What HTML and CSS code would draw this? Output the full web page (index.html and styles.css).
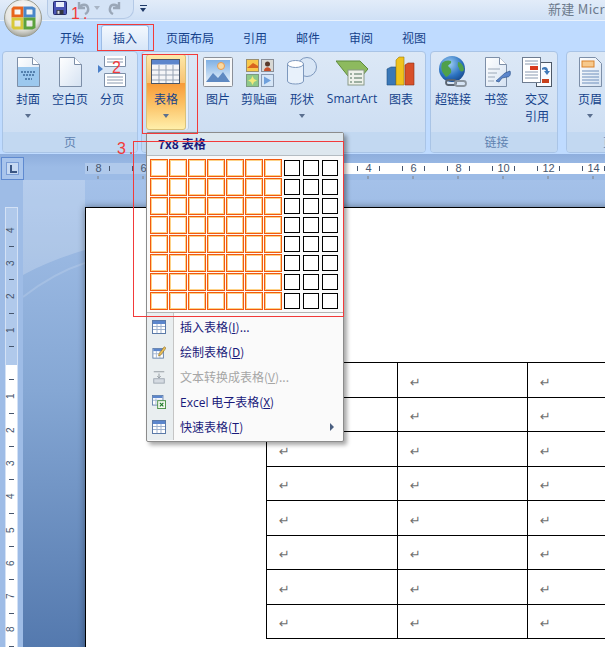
FILE: index.html
```html
<!DOCTYPE html>
<html lang="zh-CN">
<head>
    <meta charset="UTF-8">
    <meta name="viewport" content="width=device-width, initial-scale=1.0">
    <title>新建 Microsoft Word</title>
    <link rel="stylesheet" href="styles.css">
</head>
<body>
    <svg class="defs" width="0" height="0">
        <defs>
            <linearGradient id="page-fill" x1="0" y1="0" x2="1" y2="1">
                <stop offset="0" stop-color="#ffffff"/>
                <stop offset="1" stop-color="#d5e2f2"/>
            </linearGradient>
            <radialGradient id="orb-fill" cx="0.5" cy="0.35" r="0.7">
                <stop offset="0" stop-color="#ffffff"/>
                <stop offset="0.65" stop-color="#e6e6e2"/>
                <stop offset="1" stop-color="#8f9186"/>
            </radialGradient>
            <radialGradient id="globe-fill" cx="0.4" cy="0.3" r="0.8">
                <stop offset="0" stop-color="#9fd0f5"/>
                <stop offset="0.6" stop-color="#2c72c0"/>
                <stop offset="1" stop-color="#123f7f"/>
            </radialGradient>
            <linearGradient id="sky-fill" x1="0" y1="0" x2="0" y2="1">
                <stop offset="0" stop-color="#7fb0e4"/>
                <stop offset="1" stop-color="#e3effa"/>
            </linearGradient>
            <symbol id="table-small" viewBox="0 0 14 14">
                <rect x="0.5" y="0.5" width="13" height="13" fill="#fff" stroke="#5b7aa8"/>
                <rect x="1" y="1" width="12" height="3" fill="#5b86cc"/>
                <path d="M1 6.5h12M1 9.5h12M5 4v9M9 4v9" stroke="#9fb3cf" fill="none"/>
            </symbol>
        </defs>
    </svg>

    <div class="app">
        <header class="titlebar">
            <div class="qat">
                <svg class="qat-icon" viewBox="0 0 14 14">
                    <rect x="0.5" y="0.5" width="13" height="13" rx="1" fill="#4a55b5" stroke="#23296f"/>
                    <rect x="3" y="1" width="8" height="5" fill="#e8eefa"/>
                    <rect x="3.5" y="9" width="7" height="4.5" fill="#33363f"/>
                    <rect x="4.5" y="9.8" width="2" height="3" fill="#d8dbe6"/>
                </svg>
                <svg class="qat-icon undo" viewBox="0 0 14 14">
                    <path d="M3 1v6h6M3.500 7C5 3 11 2.500 12 7c.6 2.600-1 5-3 6" fill="none" stroke="#9aa7b8" stroke-width="2.400"/>
                </svg>
                <span class="qat-drop"></span>
                <svg class="qat-icon redo" viewBox="0 0 14 14">
                    <path d="M11 1v6H5M10.500 7C9 3 3 2.500 2 7c-.6 2.600 1 5 3 6" fill="none" stroke="#9aa7b8" stroke-width="2.400"/>
                </svg>
            </div>
            <div class="qat-more"></div>
            <div class="doc-title">新建 Microsoft Word</div>
        </header>

        <nav class="tabs">
            <a class="tab">开始</a>
            <a class="tab active">插入</a>
            <a class="tab">页面布局</a>
            <a class="tab">引用</a>
            <a class="tab">邮件</a>
            <a class="tab">审阅</a>
            <a class="tab">视图</a>
        </nav>

        <section class="ribbon">
            <div class="group group-pages">
                <div class="group-body">
                    <div class="tool w42">
                        <svg class="tool-icon" viewBox="0 0 32 32">
                            <path d="M5.5 1.5h15l7 7v22h-22z" fill="url(#page-fill)" stroke="#7d8fa8"/>
                            <path d="M20.5 1.5v7h7" fill="#fff" stroke="#7d8fa8"/>
                            <rect x="6" y="11" width="21" height="19" fill="#9cc8ee"/>
                            <path d="M9 16h15M11 19h11M13 23h7" stroke="#3e6a99" stroke-width="1.4" stroke-dasharray="2 1"/>
                        </svg>
                        <span class="tool-label">封面</span>
                        <span class="drop"></span>
                    </div>
                    <div class="tool w42">
                        <svg class="tool-icon" viewBox="0 0 32 32">
                            <path d="M5.5 1.5h15l7 7v22h-22z" fill="url(#page-fill)" stroke="#7d8fa8"/>
                            <path d="M20.5 1.5v7h7" fill="#fff" stroke="#7d8fa8"/>
                        </svg>
                        <span class="tool-label">空白页</span>
                    </div>
                    <div class="tool w42">
                        <svg class="tool-icon" viewBox="0 0 32 32">
                            <path d="M8.5 0v10.500h21V0" fill="#fff" stroke="#7d8fa8"/>
                            <path d="M8.500 17.500h21v13h-21z" fill="#fff" stroke="#7d8fa8"/>
                            <path d="M11 3h16M11 6h16M11 21h16M11 24h16M11 27h16" stroke="#8a9ab0"/>
                            <path d="M2 9l5 4-5 4z" fill="#4a7fc8"/>
                        </svg>
                        <span class="tool-label">分页</span>
                    </div>
                </div>
                <div class="group-name">页</div>
            </div>

            <div class="group group-tables">
                <div class="group-body">
                    <div class="tool tool-on">
                        <svg class="tool-icon" viewBox="0 0 32 32">
                            <rect x="1.500" y="3.500" width="28" height="24" fill="#f4f5f7" stroke="#4a5668"/>
                            <rect x="2" y="4" width="27" height="4.500" fill="#5c86cc"/>
                            <path d="M2 14h27M2 19h27M2 24h27M9 9v18M16 9v18M23 9v18" stroke="#97a3b3" fill="none"/>
                        </svg>
                        <span class="tool-label">表格</span>
                        <span class="drop"></span>
                    </div>
                    <div class="tool w42 after-sep">
                        <svg class="tool-icon" viewBox="0 0 32 32">
                            <rect x="1.500" y="1.500" width="29" height="29" rx="1" fill="#f6f7f8" stroke="#8a8f98"/>
                            <rect x="4" y="4" width="24" height="22" fill="url(#sky-fill)"/>
                            <circle cx="19" cy="10" r="3.500" fill="#f9d9a0" stroke="#e89b4f"/>
                            <path d="M4 26l7-9 5 5 5-6 7 10z" fill="#5e89c2"/>
                        </svg>
                        <span class="tool-label">图片</span>
                    </div>
                    <div class="tool w40">
                        <svg class="tool-icon" viewBox="0 0 32 32">
                            <rect x="3.500" y="3.500" width="12" height="12" fill="#f8c84a" stroke="#9a8f70"/>
                            <path d="M4 12l6-5 5 3v2z" fill="#d9661f"/>
                            <rect x="18.500" y="3.500" width="12" height="12" fill="#d8d8d4" stroke="#8a8f98"/>
                            <circle cx="24.500" cy="8" r="2.500" fill="#5a3a2a"/>
                            <path d="M21 15c0-5 7-5 7 0z" fill="#c8502a"/>
                            <rect x="3.500" y="18.500" width="12" height="12" fill="#8fc98a" stroke="#7d9a80"/>
                            <path d="M9.500 20l1.500 3 3 1.500-3 1.500-1.500 3-1.500-3-3-1.500 3-1.500z" fill="#f2e97a"/>
                            <rect x="18.500" y="18.500" width="12" height="12" fill="#d6e6f7" stroke="#8a9ab0"/>
                            <path d="M21 20.500l7 4-7 4z" fill="#6fa0dc"/>
                        </svg>
                        <span class="tool-label">剪贴画</span>
                    </div>
                    <div class="tool w46">
                        <svg class="tool-icon" viewBox="0 0 32 32">
                            <circle cx="21" cy="11" r="9.500" fill="#d8e6f6" stroke="#7d98bd"/>
                            <path d="M1.500 8v17c0 4 16 4 16 0V8z" fill="#e8f1fb" stroke="#7d98bd"/>
                            <ellipse cx="9.500" cy="8" rx="8" ry="3.500" fill="#fff" stroke="#7d98bd"/>
                        </svg>
                        <span class="tool-label">形状</span>
                        <span class="drop"></span>
                    </div>
                    <div class="tool w54">
                        <svg class="tool-icon" viewBox="0 0 32 32">
                            <path d="M0 5h24l8 8-6 7H12z" fill="#8dba5e" stroke="#5e8a3c"/>
                            <rect x="12" y="14" width="16" height="15" fill="#eef1ea" stroke="#8a9a88"/>
                            <path d="M14 18h2M18 18h8M14 22h2M18 22h8M14 26h2M18 26h8" stroke="#4c6e58"/>
                        </svg>
                        <span class="tool-label latin">SmartArt</span>
                    </div>
                    <div class="tool w44">
                        <svg class="tool-icon" viewBox="0 0 32 32">
                            <path d="M2 13l4-2h5v18H2z" fill="#3a78b8" stroke="#1f4e80" stroke-width=".6"/>
                            <path d="M11 4l3-3h5v28h-8z" fill="#f0c21c" stroke="#9a7a0c" stroke-width=".6"/>
                            <path d="M20 9l3-2h6v22h-9z" fill="#d8502a" stroke="#8a2f14" stroke-width=".6"/>
                        </svg>
                        <span class="tool-label">图表</span>
                    </div>
                </div>
                <div class="group-name"></div>
            </div>

            <div class="group group-links">
                <div class="group-body">
                    <div class="tool w44">
                        <svg class="tool-icon" viewBox="0 0 32 32">
                            <circle cx="15" cy="13" r="13" fill="url(#globe-fill)"/>
                            <path d="M5 7c3-3 7-3 9-2 1 3-2 3-3 5 2 2 4 3 3 7-2 1-3 4-5 4C6 17 3 14 5 7zM21 6c3 0 6 4 6 8-2 3-5 1-5-2-2-2-1-4-1-6z" fill="#4fa04a"/>
                            <rect x="9" y="24" width="10" height="5" rx="2.500" fill="none" stroke="#5a6470" stroke-width="1.800"/>
                            <rect x="18" y="25" width="11" height="5" rx="2.500" fill="none" stroke="#8a949e" stroke-width="1.800"/>
                        </svg>
                        <span class="tool-label">超链接</span>
                    </div>
                    <div class="tool w42">
                        <svg class="tool-icon" viewBox="0 0 32 32">
                            <path d="M5.500 1.500h14l7 7v22h-21z" fill="url(#page-fill)" stroke="#7d8fa8"/>
                            <path d="M19.500 1.500v7h7" fill="#fff" stroke="#7d8fa8"/>
                            <path d="M8 13h12M8 17h9M8 21h7M8 25h6" stroke="#9aa8b8"/>
                            <path d="M16 25l9-8 5-2c1 3 0 6-3 6l-5 1-3 4z" fill="#5c86cc" stroke="#2f568f" stroke-width=".7"/>
                        </svg>
                        <span class="tool-label">书签</span>
                    </div>
                    <div class="tool w40">
                        <svg class="tool-icon" viewBox="0 0 32 32">
                            <rect x="15.500" y="6.500" width="15" height="24" fill="#f8fbff" stroke="#4d5866"/>
                            <rect x="1.500" y="1.500" width="18" height="25" fill="#fff" stroke="#6e7c90"/>
                            <path d="M4 5h13M4 8h13M4 16h13M4 19h13M4 22h13" stroke="#8a9ab0"/>
                            <rect x="9" y="10" width="8" height="4" fill="#d83a1c"/>
                            <rect x="21" y="23" width="7" height="4" fill="#c8401c"/>
                            <path d="M21 12c3-2 6-1 6 3h2l-3 4-3-4h2c0-1-2-2-4-1z" fill="#3f78b8"/>
                        </svg>
                        <span class="tool-label">交叉<br>引用</span>
                    </div>
                </div>
                <div class="group-name">链接</div>
            </div>

            <div class="group group-header">
                <div class="group-body">
                    <div class="tool w46">
                        <svg class="tool-icon" viewBox="0 0 32 32">
                            <path d="M5.500 1.500h16l6 6v23h-22z" fill="url(#page-fill)" stroke="#7d8fa8"/>
                            <rect x="8" y="5" width="12" height="6" fill="#f7c98c" stroke="#d9812a"/>
                            <path d="M8 15h17M8 18h17M8 21h17M8 24h17M8 27h17" stroke="#6f8fbc"/>
                        </svg>
                        <span class="tool-label">页眉</span>
                        <span class="drop"></span>
                    </div>
                </div>
                <div class="group-name">页眉和页脚</div>
            </div>
        </section>

        <div class="ruler-row">
            <div class="tab-stop"><span class="tab-stop-l"></span></div>
            <div class="hruler-wrap">
                <div class="hruler">
                    <div class="hcell"><i></i><span>8</span><i></i></div>
                    <div class="hcell"><i></i><span>6</span><i></i></div>
                    <div class="hcell"><i></i><span>4</span><i></i></div>
                    <div class="hcell"><i></i><span>2</span><i></i></div>
                    <div class="hcell"><i></i><span></span><i></i></div>
                    <div class="hcell"><i></i><span>2</span><i></i></div>
                    <div class="hcell"><i></i><span>4</span><i></i></div>
                    <div class="hcell"><i></i><span>6</span><i></i></div>
                    <div class="hcell"><i></i><span>8</span><i></i></div>
                    <div class="hcell"><i></i><span>10</span><i></i></div>
                    <div class="hcell"><i></i><span>12</span><i></i></div>
                    <div class="hcell"><i></i><span>14</span><i></i></div>
                </div>
                <div class="hmarks"></div>
            </div>
        </div>

        <main class="workspace">
            <aside class="side">
                <div class="vruler">
                    <span>4</span><i></i><span>3</span><i></i><span>2</span><i></i><span>1</span><i></i>
                    <span></span><i></i>
                    <span>1</span><i></i><span>2</span><i></i><span>3</span><i></i><span>4</span><i></i>
                    <span>5</span><i></i><span>6</span><i></i><span>7</span><i></i><span>8</span><i></i>
                </div>
            </aside>
            <div class="canvas">
                <svg class="swoosh" viewBox="0 0 62 140" width="62" height="140">
                    <path d="M0 95C20 84 42 76 62 70V0H0z" fill="#fff" fill-opacity=".2"/>
                    <path d="M0 117C18 103 40 90 62 83" fill="none" stroke="#fff" stroke-opacity=".15" stroke-width="2"/>
                </svg>
                <div class="page">
                    <table class="doc-table">
                        <tr><td>↵</td><td>↵</td><td>↵</td></tr>
                        <tr><td>↵</td><td>↵</td><td>↵</td></tr>
                        <tr><td>↵</td><td>↵</td><td>↵</td></tr>
                        <tr><td>↵</td><td>↵</td><td>↵</td></tr>
                        <tr><td>↵</td><td>↵</td><td>↵</td></tr>
                        <tr><td>↵</td><td>↵</td><td>↵</td></tr>
                        <tr><td>↵</td><td>↵</td><td>↵</td></tr>
                        <tr><td>↵</td><td>↵</td><td>↵</td></tr>
                    </table>
                </div>
            </div>
        </main>

        <!-- office orb hangs over the title bar and tabs -->
        <div class="orb">
            <svg viewBox="0 0 38 38" width="38" height="38">
                <circle cx="19" cy="19" r="18.500" fill="url(#orb-fill)" stroke="#9a9c90"/>
                <path d="M10 9h8v8h-9v-7z" fill="none" stroke="#e8641c" stroke-width="3"/>
                <path d="M21 9h7l2 1v7h-9z" fill="none" stroke="#4a86c8" stroke-width="3"/>
                <path d="M9 20h9v9h-8l-1-1z" fill="none" stroke="#d8c83a" stroke-width="3"/>
                <path d="M21 20h9v8l-2 1h-7z" fill="none" stroke="#5ca23c" stroke-width="3"/>
            </svg>
        </div>

        <!-- table dropdown -->
        <div class="menu">
            <div class="menu-head">7x8 表格</div>
            <div class="picker">
                <div class="cell on"></div><div class="cell on"></div><div class="cell on"></div><div class="cell on"></div><div class="cell on"></div><div class="cell on"></div><div class="cell on"></div><div class="cell"></div><div class="cell"></div><div class="cell"></div>
                <div class="cell on"></div><div class="cell on"></div><div class="cell on"></div><div class="cell on"></div><div class="cell on"></div><div class="cell on"></div><div class="cell on"></div><div class="cell"></div><div class="cell"></div><div class="cell"></div>
                <div class="cell on"></div><div class="cell on"></div><div class="cell on"></div><div class="cell on"></div><div class="cell on"></div><div class="cell on"></div><div class="cell on"></div><div class="cell"></div><div class="cell"></div><div class="cell"></div>
                <div class="cell on"></div><div class="cell on"></div><div class="cell on"></div><div class="cell on"></div><div class="cell on"></div><div class="cell on"></div><div class="cell on"></div><div class="cell"></div><div class="cell"></div><div class="cell"></div>
                <div class="cell on"></div><div class="cell on"></div><div class="cell on"></div><div class="cell on"></div><div class="cell on"></div><div class="cell on"></div><div class="cell on"></div><div class="cell"></div><div class="cell"></div><div class="cell"></div>
                <div class="cell on"></div><div class="cell on"></div><div class="cell on"></div><div class="cell on"></div><div class="cell on"></div><div class="cell on"></div><div class="cell on"></div><div class="cell"></div><div class="cell"></div><div class="cell"></div>
                <div class="cell on"></div><div class="cell on"></div><div class="cell on"></div><div class="cell on"></div><div class="cell on"></div><div class="cell on"></div><div class="cell on"></div><div class="cell"></div><div class="cell"></div><div class="cell"></div>
                <div class="cell on"></div><div class="cell on"></div><div class="cell on"></div><div class="cell on"></div><div class="cell on"></div><div class="cell on"></div><div class="cell on"></div><div class="cell"></div><div class="cell"></div><div class="cell"></div>
            </div>
            <ul class="menu-list">
                <li class="menu-item">
                    <svg class="menu-icon"><use href="#table-small"/></svg>
                    <span>插入表格(<u>I</u>)...</span>
                </li>
                <li class="menu-item">
                    <svg class="menu-icon" viewBox="0 0 16 16">
                        <rect x="1" y="4" width="12" height="11" fill="#fff" stroke="#5b7aa8"/>
                        <rect x="1.500" y="4.500" width="11" height="2.500" fill="#5b86cc"/>
                        <path d="M1 10h12M5 7v8M9 7v8" stroke="#9fb3cf"/>
                        <path d="M8 10l6-8 2 1.500-6 8-2.500 1z" fill="#eec25a" stroke="#8a6a20" stroke-width=".7"/>
                    </svg>
                    <span>绘制表格(<u>D</u>)</span>
                </li>
                <li class="menu-item disabled">
                    <svg class="menu-icon" viewBox="0 0 16 16">
                        <path d="M2 2h12M8 4v5M6 7l2 2 2-2" stroke="#8a9299" fill="none"/>
                        <rect x="2" y="10" width="12" height="5" fill="#d5dbe2" stroke="#9aa4ae"/>
                    </svg>
                    <span>文本转换成表格(<u>V</u>)...</span>
                </li>
                <li class="menu-item">
                    <svg class="menu-icon" viewBox="0 0 16 16">
                        <rect x="0.500" y="0.500" width="12" height="11" fill="#fff" stroke="#5b7aa8"/>
                        <rect x="1" y="1" width="11" height="2.500" fill="#5b86cc"/>
                        <path d="M1 6h11M4.500 4v7" stroke="#9fb3cf"/>
                        <rect x="6.500" y="6.500" width="9" height="9" fill="#f2f8ee" stroke="#3f8a3a"/>
                        <path d="M9 9l4 4M13 9l-4 4" stroke="#1f7a2a" stroke-width="1.300"/>
                    </svg>
                    <span><span class="latin">Excel</span> 电子表格(<u>X</u>)</span>
                </li>
                <li class="menu-item">
                    <svg class="menu-icon"><use href="#table-small"/></svg>
                    <span>快速表格(<u>T</u>)</span>
                    <span class="menu-arrow"></span>
                </li>
            </ul>
        </div>

        <!-- red annotations drawn over the screenshot -->
        <div class="mark mark-tab"></div>
        <div class="mark mark-button"></div>
        <div class="mark mark-grid"></div>
        <span class="mark-num num-1">1.</span>
        <span class="mark-num num-2">2</span>
        <span class="mark-num num-3">3.</span>
    </div>
</body>
</html>
```

FILE: styles.css
```css
:root {
    --ribbon-blue: #bfdbff;
    --label-color: #15428b;
    --menu-text: #1a1a7a;
    --note-red: #f23a3a;
    --cjk: "Noto Sans CJK SC", "Noto Sans", sans-serif;
}

* {
    box-sizing: border-box;
    margin: 0;
    padding: 0;
}

body {
    font-family: var(--cjk);
    font-size: 12px;
    background: #fff;
}

.defs {
    position: absolute;
}

.app {
    position: relative;
    display: flex;
    flex-direction: column;
    width: 605px;
    height: 647px;
    overflow: hidden;
}

.latin {
    font-family: "Open Sans", "Noto Sans", sans-serif;
}

/* title bar */

.titlebar {
    display: flex;
    align-items: flex-start;
    flex: none;
    height: 21px;
    padding-left: 47px;
    background: linear-gradient(#e2ecf9, #cfe0f5);
    border-bottom: 1px solid #e9f2fd;
    white-space: nowrap;
}

.qat {
    display: flex;
    align-items: center;
    flex: none;
    width: 87px;
    height: 19px;
    padding: 0 0 2px 5px;
    background: #d4e3f6;
    border: 1px solid #b4c9e6;
    border-top: 0;
    border-radius: 0 0 10px 6px / 0 0 10px 6px;
}

.qat-icon {
    flex: none;
    width: 14px;
    height: 14px;
}

.undo {
    margin-left: 9px;
}

.qat-drop {
    flex: none;
    width: 0;
    height: 0;
    margin: 0 8px 0 4px;
    border: 3px solid transparent;
    border-top: 4px solid #a8b4c4;
    border-bottom: 0;
}

.qat-more {
    position: relative;
    flex: none;
    width: 7px;
    height: 8px;
    margin: 5px 0 0 6px;
    border-top: 1px solid #1f3a68;
}

.qat-more::after {
    content: "";
    position: absolute;
    left: 0;
    top: 2px;
    border: 3.5px solid transparent;
    border-top: 4px solid #1f3a68;
    border-bottom: 0;
}

.doc-title {
    flex: none;
    margin-left: 401px;
    font-size: 13px;
    line-height: 18px;
    letter-spacing: .3px;
    color: #6c7a8c;
}

/* tabs */

.tabs {
    display: flex;
    flex: none;
    gap: 5px;
    height: 29px;
    padding: 4px 0 0 48px;
    background: var(--ribbon-blue);
}

.tab {
    display: block;
    padding: 0 11px;
    border: 1px solid transparent;
    border-bottom: 0;
    line-height: 23px;
    color: var(--label-color);
}

.active {
    background: linear-gradient(#f3f8fe, #d7e6f8);
    border-color: #9dbce6;
    border-radius: 3px 3px 0 0;
}

/* ribbon */

.ribbon {
    display: flex;
    flex: none;
    gap: 4px;
    height: 104px;
    padding: 1px 0 0 2px;
    background: var(--ribbon-blue);
}

.group {
    display: flex;
    flex: none;
    flex-direction: column;
    height: 102px;
    background: linear-gradient(#dce8f6, #cadcf2);
    border: 1px solid #a9c4e6;
    border-radius: 4px;
    overflow: hidden;
}

.group-pages {
    width: 136px;
    margin-right: -1px;
}

.group-tables {
    width: 285px;
}

.group-links {
    width: 128px;
    margin-right: 4px;
}

.group-links .group-name {
    padding-left: 5px;
}

.group-header {
    width: 134px;
}

.group-body {
    display: flex;
    flex: 1;
    padding: 2px 0 0 4px;
}

.group-links .group-body,
.group-header .group-body {
    padding-left: 0;
}

.group-name {
    flex: none;
    height: 20px;
    background: #c2d8f1;
    color: #5f82b0;
    text-align: center;
    line-height: 19px;
}

.tool {
    display: flex;
    flex: none;
    flex-direction: column;
    align-items: center;
    width: 40px;
    height: 76px;
    padding-top: 2px;
    text-align: center;
    color: var(--label-color);
}

.w40 { width: 40px; }
.w42 { width: 42px; }
.w44 { width: 44px; }
.w46 { width: 46px; }
.w54 { width: 54px; }

.tool-icon {
    flex: none;
    width: 32px;
    height: 32px;
}

.tool-label {
    margin-top: 2px;
    line-height: 17px;
    white-space: nowrap;
}

.drop {
    width: 0;
    height: 0;
    margin-top: 7px;
    border: 3.500px solid transparent;
    border-top: 4px solid #5a6f8f;
    border-bottom: 0;
}

.tool-on {
    padding-top: 1px;
    background: linear-gradient(#fde8a8, #f8c274 38%, #f79a38 38%, #fbbf62 65%, #ffefaa);
    border: 1px solid #d9c27a;
    border-radius: 3px;
    box-shadow: 2px 0 0 #e6eef8, 3px 0 0 #b9cbe2;
}

.after-sep {
    margin-left: 11px;
}

/* rulers */

.ruler-row {
    display: flex;
    flex: none;
    height: 26px;
    padding-top: 3px;
    background: linear-gradient(#8eaedd, #9cbbe6 50%);
}

.tab-stop {
    display: flex;
    align-items: center;
    justify-content: center;
    flex: none;
    width: 23px;
    height: 23px;
    margin-left: 1px;
    background: #a9c5ec;
    border: 1px solid #5f8ad0;
}

.tab-stop-l {
    width: 13px;
    height: 13px;
    background-color: #c6d9f3;
    background-image: linear-gradient(#3a5684, #3a5684), linear-gradient(#3a5684, #3a5684);
    background-size: 2px 7px, 7px 2px;
    background-position: 3px 2px, 3px 8px;
    background-repeat: no-repeat;
    border: 1px solid #7a9dd6;
}

.hruler-wrap {
    flex: none;
    width: 520px;
    margin-left: 61px;
    padding-top: 6px;
    overflow: hidden;
}

.hruler {
    display: flex;
    height: 11px;
    margin-left: -9px;
    background: linear-gradient(to right, #b0c9eb 202px, #fff 202px);
}

.hcell {
    display: flex;
    align-items: center;
    justify-content: space-between;
    flex: none;
    width: 45px;
    padding: 0 11px;
    font: 11px/11px "Liberation Sans", sans-serif;
    color: #46566e;
}

.hcell i {
    width: 1px;
    height: 5px;
    background: #46566e;
}

.hmarks {
    height: 3px;
    margin-top: 2px;
    background: repeating-linear-gradient(to right, #7d7d7d 0 1px, transparent 1px 45px) 12.500px 0;
}

.workspace {
    display: flex;
    flex: 1;
    min-height: 0;
}

.side {
    flex: none;
    width: 23px;
    padding: 27px 0 0 5px;
    background: #9ebce6;
}

.vruler {
    display: flex;
    flex-direction: column;
    width: 13px;
    height: 460px;
    padding-top: 13.700px;
    background: linear-gradient(#b0c9eb 157px, #fff 157px);
    border-left: 1px solid #d3e1f5;
    border-right: 1px solid #d3e1f5;
    border-top: 1px solid #d3e1f5;
    font: 10px/16.660px "Liberation Sans", sans-serif;
    color: #46566e;
}

.vruler span {
    flex: none;
    height: 16.660px;
    text-align: center;
    transform: rotate(-90deg);
}

.vruler i {
    flex: none;
    height: 16.660px;
    background: linear-gradient(#46566e, #46566e) center / 5px 1px no-repeat;
}

.canvas {
    position: relative;
    flex: 1;
    min-width: 0;
    padding: 27px 0 0 62px;
    background: linear-gradient(#a4c1e9, #85a7d4 45%, #5479ae);
    overflow: hidden;
}

.swoosh {
    position: absolute;
    left: 0;
    top: 0;
}

.page {
    position: relative;
    width: 700px;
    height: 600px;
    padding: 154px 0 0 180px;
    background: #fff;
    border-top: 1px solid #000;
    border-left: 1px solid #000;
    box-shadow: 0 0 7px rgba(0, 0, 0, .4);
}

.doc-table {
    border-collapse: collapse;
    table-layout: fixed;
    width: 392px;
}

.doc-table td {
    width: 130px;
    height: 34.500px;
    padding: 6px 0 0 12px;
    border: 1px solid #000;
    font: 13px/14px "DejaVu Sans", sans-serif;
    color: #707070;
}

.doc-table td:first-child {
    width: 131px;
}

/* office orb */

.orb {
    position: absolute;
    left: 4px;
    top: -1px;
    width: 38px;
    height: 38px;
}

/* dropdown */

.menu {
    position: absolute;
    left: 146px;
    top: 132px;
    width: 198px;
    height: 310px;
    background: #fafafa;
    border: 1px solid #8c8c8c;
    border-radius: 2px;
    box-shadow: 3px 3px 4px rgba(0, 0, 0, .35);
}

.menu-head {
    height: 23px;
    padding-left: 11px;
    background: #dde7ee;
    border-bottom: 1px solid #b4bcc2;
    font-weight: 700;
    line-height: 22px;
    color: var(--menu-text);
}

.picker {
    display: grid;
    grid-template-columns: repeat(10, 18px);
    grid-auto-rows: 18px;
    gap: 1px;
    height: 157px;
    padding: 3px 0 0 3px;
    border-bottom: 1px solid #b4b4b4;
}

.cell {
    margin: 1px;
    background: #fff;
    border: 1px solid #000;
}

.cell.on {
    margin: 0;
    border-color: #f25a10;
    box-shadow: inset 0 0 0 1px #fdd287;
}

.menu-list {
    height: 127px;
    padding-top: 1px;
    list-style: none;
    background: linear-gradient(to right, #e9eef0 26px, #c5c5c5 26px, #c5c5c5 27px, transparent 27px);
}

.menu-item {
    display: flex;
    align-items: center;
    height: 25px;
    color: var(--menu-text);
    white-space: nowrap;
}

.menu-icon {
    flex: none;
    width: 14px;
    height: 14px;
    margin: 0 14px 0 5px;
}

.disabled {
    color: #a6a6a6;
}

.menu-arrow {
    width: 0;
    height: 0;
    margin-left: auto;
    margin-right: 9px;
    border: 4px solid transparent;
    border-left: 4px solid #4a5f80;
    border-right: 0;
}

/* annotations */

.mark {
    position: absolute;
    border: 1px solid var(--note-red);
}

.mark-tab {
    left: 97px;
    top: 24px;
    width: 57px;
    height: 27px;
}

.mark-button {
    left: 142px;
    top: 54px;
    width: 56px;
    height: 80px;
}

.mark-grid {
    left: 133px;
    top: 141px;
    width: 211px;
    height: 176px;
}

.mark-num {
    position: absolute;
    font: 16px/16px "Liberation Sans", sans-serif;
    letter-spacing: 3px;
    color: var(--note-red);
}

.num-1 { left: 71px; top: 6px; }
.num-2 { left: 112px; top: 60px; }
.num-3 { left: 117px; top: 141px; }
```
